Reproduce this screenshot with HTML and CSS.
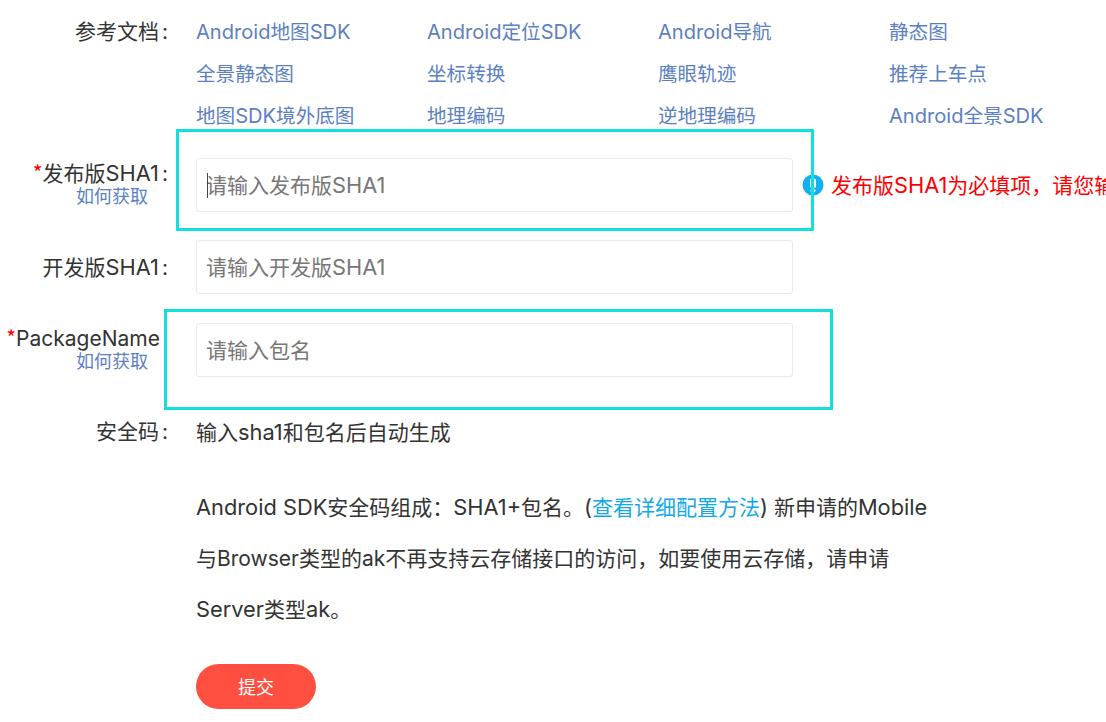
FILE: index.html
```html
<!DOCTYPE html>
<html lang="zh-CN">
<head>
    <meta charset="UTF-8">
    <title>创建应用</title>
    <link rel="stylesheet" href="styles.css">
</head>
<body>
<div id="form">
    <div class="row docs-row">
        <div class="label">参考文档<span class="colon">:</span></div>
        <ul class="docs">
            <li><a href="#"><span class="en">Android</span>地图<span class="en">SDK</span></a></li>
            <li><a href="#"><span class="en">Android</span>定位<span class="en">SDK</span></a></li>
            <li><a href="#"><span class="en">Android</span>导航</a></li>
            <li><a href="#">静态图</a></li>
            <li><a href="#">全景静态图</a></li>
            <li><a href="#">坐标转换</a></li>
            <li><a href="#">鹰眼轨迹</a></li>
            <li><a href="#">推荐上车点</a></li>
            <li><a href="#">地图<span class="en">SDK</span>境外底图</a></li>
            <li><a href="#">地理编码</a></li>
            <li><a href="#">逆地理编码</a></li>
            <li><a href="#"><span class="en">Android</span>全景<span class="en">SDK</span></a></li>
        </ul>
    </div>
    <div class="row input-row first-input">
        <div class="label">
            <div><span class="star">*</span>发布版<span class="en">SHA1</span><span class="colon">:</span></div>
            <a class="how" href="#">如何获取</a>
        </div>
        <div class="input-box"><span class="caret"></span><span class="placeholder">请输入发布版<span class="en">SHA1</span></span></div>
        <div class="error">
            <svg class="error-icon" viewBox="0 0 22 22" width="22" height="22"><circle cx="11" cy="11" r="10.5" fill="#12b0ec"/><rect x="8" y="4.5" width="6" height="9.5" rx="2" fill="#fff"/><rect x="8.5" y="15" width="5" height="3" rx="1.5" fill="#fff"/></svg>
            <span class="error-text">发布版<span class="en">SHA1</span>为必填项，请您输入发布版<span class="en">SHA1</span></span>
        </div>
    </div>
    <div class="row input-row second-input">
        <div class="label label-mid"><div>开发版<span class="en">SHA1</span><span class="colon">:</span></div></div>
        <div class="input-box"><span class="placeholder">请输入开发版<span class="en">SHA1</span></span></div>
    </div>
    <div class="row input-row third-input">
        <div class="label label-pkg">
            <div><span class="star">*</span>PackageName</div>
            <a class="how" href="#">如何获取</a>
        </div>
        <div class="input-box"><span class="placeholder">请输入包名</span></div>
    </div>
    <div class="row code-row">
        <div class="label">安全码<span class="colon">:</span></div>
        <div class="code-val">输入<span class="en">sha1</span>和包名后自动生成</div>
    </div>
    <p class="note"><span class="en">Android SDK</span>安全码组成：<span class="en">SHA1+</span>包名。<span class="en">(</span><a href="#">查看详细配置方法</a><span class="en">)</span> 新申请的<span class="en">Mobile</span>与Browser类型的ak不再支持云存储接口的访问，如要使用云存储，请申请<span class="en">Server</span>类型<span class="en">ak</span>。</p>
    <button class="submit">提交</button>
</div>
<div class="mark mark-1"></div>
<div class="mark mark-2"></div>
</body>
</html>
```
FILE: styles.css
```css
*{
    margin: 0;
    padding: 0;
    box-sizing: border-box;
}
ul{
    list-style: none;
}
a{
    text-decoration: none;
}
html, body{
    height: 722px;
    overflow: hidden;
}
body{
    position: relative;
    background: #fff;
    color: #333;
    font-family: "Inter", "Noto Sans CJK SC", sans-serif;
    font-size: 21px;
}
.en{
    font-size: 21.8px;
}
#form{
    padding-top: 11px;
    width: 1106px;
    overflow: hidden;
}
.row{
    display: flex;
    white-space: nowrap;
}
.label{
    flex: none;
    width: 168px;
    margin-right: 28px;
    text-align: right;
    line-height: 42px;
}
.colon{
    margin-left: 3px;
}
.docs{
    display: grid;
    grid-template-columns: repeat(4, 231px);
    grid-auto-rows: 42px;
    line-height: 42px;
    font-size: 19.6px;
}
.docs .en{
    font-size: 20.1px;
}
.docs a, .how{
    color: #5c7fc2;
}
.input-row{
    height: 54px;
}
.first-input{
    margin-top: 21px;
}
.second-input{
    margin-top: 28px;
}
.third-input{
    margin-top: 29px;
}
.input-row .label{
    line-height: 28px;
}
.input-row .label-mid{
    line-height: 54px;
}
.label-pkg{
    width: 160px;
    margin-right: 36px;
}
.how{
    display: block;
    font-size: 18px;
    line-height: 20px;
    margin-top: -1px;
    padding-right: 20px;
}
.label-pkg .how{
    padding-right: 12px;
}
.star{
    color: #f00;
    font-family: "Noto Sans CJK SC", sans-serif;
}
.input-box{
    flex: none;
    width: 597px;
    height: 54px;
    border: 1px solid #e6e9f0;
    border-radius: 3px;
    padding-left: 9px;
    line-height: 53px;
    color: #777;
    position: relative;
}
.caret{
    position: absolute;
    left: 10px;
    top: 14px;
    width: 1px;
    height: 25px;
    background: #444;
}
.error{
    display: flex;
    align-items: center;
    margin-left: 9px;
    color: #f00;
    gap: 7px;
}
.error-icon{
    flex: none;
}
.error-text{
    margin-top: -3px;
}
.code-row{
    margin-top: 34px;
    line-height: 42px;
}
.note{
    margin: 28px 0 0 196px;
    width: 740px;
    line-height: 51px;
}
.note a{
    color: #12a9e8;
}
.submit{
    display: block;
    margin: 29px 0 0 196px;
    width: 120px;
    height: 45px;
    border: 0;
    border-radius: 23px;
    padding-bottom: 2px;
    background: #ff4f40;
    color: #fff;
    font-family: inherit;
    font-size: 18px;
}
.mark{
    position: absolute;
    border: 3px solid #14dfdf;
    pointer-events: none;
}
.mark-1{
    left: 176px;
    top: 129px;
    width: 638px;
    height: 102px;
}
.mark-2{
    left: 164px;
    top: 309px;
    width: 669px;
    height: 101px;
}
```
